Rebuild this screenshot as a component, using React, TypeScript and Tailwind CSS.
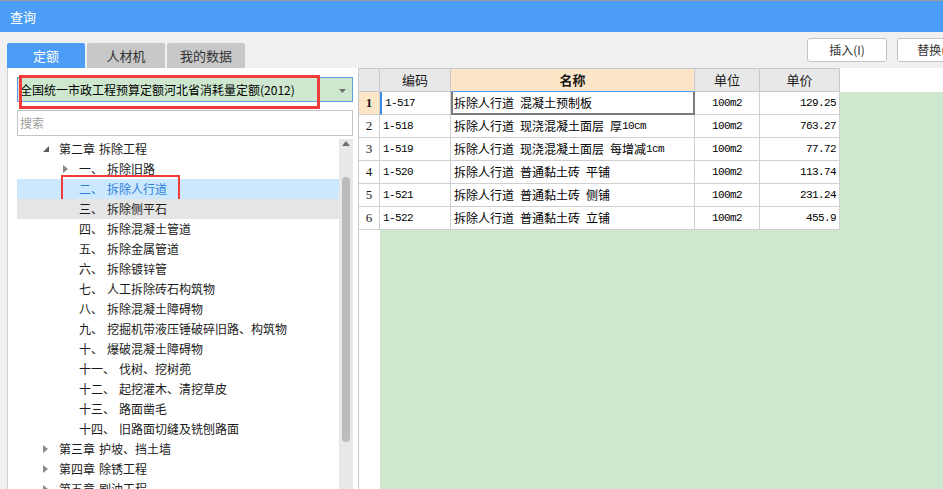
import React from "react";

type Node = {
  lvl: 0 | 1;
  icon?: "open" | "closed";
  a: string;
  b: string;
  sel?: boolean;
  hover?: boolean;
};

const tree: Node[] = [
  { lvl: 0, icon: "open", a: "第二章", b: "拆除工程" },
  { lvl: 1, icon: "closed", a: "一、", b: "拆除旧路" },
  { lvl: 1, a: "二、", b: "拆除人行道", sel: true },
  { lvl: 1, a: "三、", b: "拆除侧平石", hover: true },
  { lvl: 1, a: "四、", b: "拆除混凝土管道" },
  { lvl: 1, a: "五、", b: "拆除金属管道" },
  { lvl: 1, a: "六、", b: "拆除镀锌管" },
  { lvl: 1, a: "七、", b: "人工拆除砖石构筑物" },
  { lvl: 1, a: "八、", b: "拆除混凝土障碍物" },
  { lvl: 1, a: "九、", b: "挖掘机带液压锤破碎旧路、构筑物" },
  { lvl: 1, a: "十、", b: "爆破混凝土障碍物" },
  { lvl: 1, a: "十一、", b: "伐树、挖树蔸" },
  { lvl: 1, a: "十二、", b: "起挖灌木、清挖草皮" },
  { lvl: 1, a: "十三、", b: "路面凿毛" },
  { lvl: 1, a: "十四、", b: "旧路面切缝及铣刨路面" },
  { lvl: 0, icon: "closed", a: "第三章", b: "护坡、挡土墙" },
  { lvl: 0, icon: "closed", a: "第四章", b: "除锈工程" },
  { lvl: 0, icon: "closed", a: "第五章", b: "刷油工程" },
];

const rows = [
  { code: "1-517", name: "拆除人行道 混凝土预制板", unit: "100m2", price: "129.25" },
  { code: "1-518", name: "拆除人行道 现浇混凝土面层 厚10cm", unit: "100m2", price: "763.27" },
  { code: "1-519", name: "拆除人行道 现浇混凝土面层 每增减1cm", unit: "100m2", price: "77.72" },
  { code: "1-520", name: "拆除人行道 普通黏土砖 平铺", unit: "100m2", price: "113.74" },
  { code: "1-521", name: "拆除人行道 普通黏土砖 侧铺", unit: "100m2", price: "231.24" },
  { code: "1-522", name: "拆除人行道 普通黏土砖 立铺", unit: "100m2", price: "455.9" },
];

function Mixed({ text }: { text: string }) {
  const parts = text.split(/([\x20-\x7e]+)/).filter((p) => p.length > 0);
  return (
    <>
      {parts.map((p, i) =>
        /^[\x20-\x7e]+$/.test(p) ? (
          <span key={i} className="font-['Liberation_Mono',monospace] text-[11px] tracking-[-0.6px] whitespace-pre">
            {p}
          </span>
        ) : (
          <span key={i}>{p}</span>
        )
      )}
    </>
  );
}

function OpenTri() {
  return (
    <svg width="6" height="6" viewBox="0 0 6 6">
      <polygon points="6,0 6,6 0,6" fill="#5a5a5a" />
    </svg>
  );
}

function ClosedTri() {
  return (
    <svg width="5" height="8" viewBox="0 0 5 8">
      <polygon points="0,0 5,4 0,8" fill="#8a8a8a" />
    </svg>
  );
}

export default function App() {
  return (
    <div className="w-[943px] h-[489px] overflow-hidden bg-[#f0f0f0] flex flex-col font-['Noto_Sans_CJK_SC',sans-serif] text-[#1a1a1a]">
      {/* title bar */}
      <div className="h-[32px] shrink-0 bg-[#4b9df7] border-t border-[#9a9a9a] flex items-center pl-[10px] text-white text-[13px]">
        查询
      </div>

      <div className="flex-1 flex min-h-0">
        {/* left column */}
        <div className="w-[358px] shrink-0 flex flex-col pt-[11px] pl-[7px]">
          <div className="h-[25px] flex gap-[2px] text-[13px]">
            <div className="w-[78px] bg-[#4b9df7] text-white rounded-t-[2px] flex items-center justify-center">定额</div>
            <div className="w-[78px] bg-[#c8c8c8] text-[#333] rounded-t-[2px] flex items-center justify-center">人材机</div>
            <div className="w-[78px] bg-[#c8c8c8] text-[#333] rounded-t-[2px] flex items-center justify-center">我的数据</div>
          </div>
          <div className="flex-1 min-h-0 bg-white border-l border-[#cfcfcf] flex flex-col pl-[9px] pr-[5px] pt-[9px]">
            {/* dropdown */}
            <div className="relative h-[25px] shrink-0 bg-[#cee8cf] border border-[#5c9fe6] flex items-center pl-[2px] text-[12px] text-black">
              <span>全国统一市政工程预算定额河北省消耗量定额(2012)</span>
              <svg className="absolute right-[6px] top-[11px]" width="7" height="4" viewBox="0 0 7 4">
                <polygon points="0,0 7,0 3.5,4" fill="#707070" />
              </svg>
              <div className="absolute left-[1px] top-[-3px] w-[301px] h-[34px] border-[3px] border-[#f23b3b]" />
            </div>
            {/* search */}
            <div className="h-[26px] shrink-0 mt-[8px] border border-[#c4c4c4] flex items-center pl-[2px] text-[12px] text-[#a0a0a0]">
              搜索
            </div>
            {/* tree */}
            <div className="flex-1 min-h-0 mt-[3px] flex">
              <div className="flex-1 overflow-hidden text-[12px]">
                {tree.map((n, i) => (
                  <div
                    key={i}
                    className={
                      "relative h-[20px] flex items-center whitespace-nowrap " +
                      (n.sel ? "bg-[#cce8ff] text-[#2f7ed8] " : "") +
                      (n.hover ? "bg-[#e5e5e5] " : "") +
                      (n.lvl === 0 ? "pl-[26px]" : "pl-[46px]")
                    }
                  >
                    <div className="w-[16px] h-[20px] flex items-center">
                      {n.icon === "open" ? <OpenTri /> : n.icon === "closed" ? <ClosedTri /> : null}
                    </div>
                    <span>{n.a}</span>
                    <span className="ml-[4px]">{n.b}</span>
                    {n.sel ? (
                      <div className="absolute left-[44px] top-[-4px] w-[119px] h-[26px] border-2 border-[#f23b3b]" />
                    ) : null}
                  </div>
                ))}
              </div>
              <div className="w-[14px] shrink-0 bg-[#e8e8e8] flex flex-col items-center">
                <svg className="mt-[2px]" width="8" height="5" viewBox="0 0 8 5">
                  <polygon points="0,5 8,5 4,0" fill="#6e6e6e" />
                </svg>
                <div className="mt-[31px] w-[8px] h-[265px] rounded-full bg-[#bcbcbc]" />
              </div>
            </div>
          </div>
        </div>

        {/* right column */}
        <div className="flex-1 min-w-0 flex flex-col">
          <div className="h-[36px] shrink-0 flex items-center pl-[449px] gap-[10px] overflow-hidden">
            <div className="w-[80px] h-[24px] shrink-0 bg-white border border-[#c4c4c4] rounded-[3px] flex items-center justify-center text-[12px] text-[#333]">
              插入(I)
            </div>
            <div className="w-[80px] h-[24px] shrink-0 bg-white border border-[#c4c4c4] rounded-[3px] flex items-center justify-center text-[12px] text-[#333]">
              替换(R)
            </div>
          </div>
          <div className="flex-1 min-h-0 bg-white border-l border-[#c8c8c8] flex flex-col">
            {/* header */}
            <div className="h-[24px] shrink-0 flex text-[13px]">
              <div className="w-[21px] bg-[#e8e8e8] border-t border-r border-b border-[#c8c8c8]" />
              <div className="w-[71px] bg-[#e8e8e8] border-t border-r border-b border-[#c8c8c8] flex items-center justify-center">编码</div>
              <div className="w-[244px] bg-[#fde5c7] border-t border-r border-[#c8c8c8] border-b border-b-[#4b9df7] flex items-center justify-center font-bold">名称</div>
              <div className="w-[65px] bg-[#e8e8e8] border-t border-r border-b border-[#c8c8c8] flex items-center justify-center">单位</div>
              <div className="w-[80px] bg-[#e8e8e8] border-t border-r border-b border-[#c8c8c8] flex items-center justify-center">单价</div>
            </div>
            {/* body */}
            <div className="flex-1 min-h-0 flex">
              <div className="w-[21px] shrink-0 bg-white">
                {rows.map((r, i) => (
                  <div
                    key={i}
                    className={
                      "h-[23px] border-r border-b border-[#d0d0d0] flex items-center justify-center font-['Liberation_Serif',serif] text-[13px] " +
                      (i === 0 ? "bg-[#fde5c7] font-bold" : "")
                    }
                  >
                    {i + 1}
                  </div>
                ))}
              </div>
              <div className="flex-1 bg-[#cee8d0]">
                {rows.map((r, i) => (
                  <div key={i} className="h-[23px] flex bg-white w-[460px] text-[12px] text-black">
                    <div
                      className={
                        "w-[71px] border-r border-b border-[#d0d0d0] flex items-center pl-[3px] " +
                        (i === 0 ? "border-l-2 border-l-[#3c8ce7] pl-[1px]" : "")
                      }
                    >
                      <Mixed text={r.code} />
                    </div>
                    <div
                      className={
                        "w-[244px] flex items-center whitespace-nowrap overflow-hidden " +
                        (i === 0
                          ? "border-l-2 border-r-2 border-b-2 border-[#7c7c7c] pl-[1px]"
                          : "border-r border-b border-[#d0d0d0] pl-[3px]")
                      }
                    >
                      <Mixed text={r.name} />
                    </div>
                    <div className="w-[65px] border-r border-b border-[#d0d0d0] flex items-center justify-center">
                      <Mixed text={r.unit} />
                    </div>
                    <div className="w-[80px] border-r border-b border-[#d0d0d0] flex items-center justify-end pr-[3px]">
                      <Mixed text={r.price} />
                    </div>
                  </div>
                ))}
              </div>
            </div>
          </div>
        </div>
      </div>
    </div>
  );
}
